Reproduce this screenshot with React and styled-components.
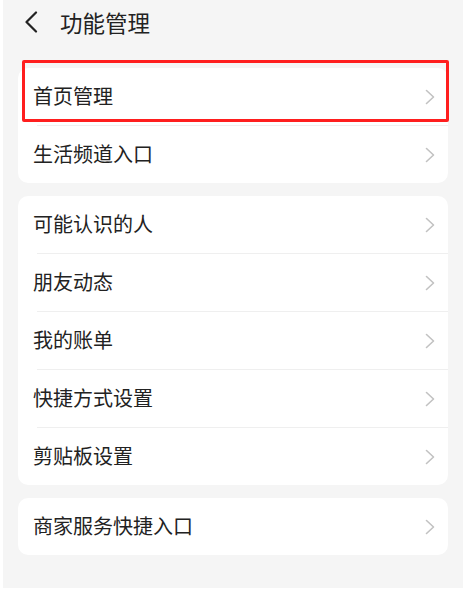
import React from "react";
import styled, { createGlobalStyle } from "styled-components";

const Global = createGlobalStyle`
  html, body { margin: 0; padding: 0; background: #ffffff; }
  body { font-family: "Noto Sans CJK SC", "Noto Sans", sans-serif; }
`;

const Page = styled.div`
  margin-left: 3px;
  width: 460px;
  height: 588px;
  background: #f5f5f5;
  padding: 0 15px;
  box-sizing: border-box;
  display: flex;
  flex-direction: column;
`;

const Header = styled.div`
  height: 44px;
  display: flex;
  align-items: center;
  gap: 22px;
  padding-left: 6px;
`;

const Title = styled.h1`
  margin: 0;
  font-size: 22.5px;
  font-weight: 400;
  color: #222222;
  line-height: 1;
`;

const Cards = styled.div`
  margin-top: 24px;
  display: flex;
  flex-direction: column;
  gap: 13px;
`;

const Card = styled.div`
  position: relative;
  background: #ffffff;
  border-radius: 10px;
  display: flex;
  flex-direction: column;
`;

const Row = styled.div`
  height: 57px;
  display: flex;
  align-items: center;
  justify-content: space-between;
  padding: 0 13px 0 15px;
`;

const Label = styled.span`
  font-size: 20px;
  color: #222222;
  line-height: 1;
  margin-top: -2px;
`;

const Divider = styled.div`
  height: 1px;
  margin-left: 19px;
  background: #efefef;
`;

const Highlight = styled.div`
  position: absolute;
  left: 4px;
  top: -8px;
  width: 427px;
  height: 62px;
  box-sizing: border-box;
  border: 3px solid #ff1e1e;
  border-radius: 2px;
  pointer-events: none;
`;

const Back = () => (
  <svg width="14" height="22" viewBox="0 0 14 22">
    <polyline points="12,1.5 2.5,11 12,20.5" fill="none" stroke="#222" strokeWidth="2.2" strokeLinecap="round" strokeLinejoin="round" />
  </svg>
);

const Chevron = () => (
  <svg width="10" height="16" viewBox="0 0 10 16">
    <polyline points="1.5,1.5 8.5,8 1.5,14.5" fill="none" stroke="#c2c2c2" strokeWidth="1.6" strokeLinecap="round" strokeLinejoin="round" />
  </svg>
);

const groups = [
  ["首页管理", "生活频道入口"],
  ["可能认识的人", "朋友动态", "我的账单", "快捷方式设置", "剪贴板设置"],
  ["商家服务快捷入口"],
];

export default function App() {
  return (
    <>
      <Global />
      <Page>
        <Header>
          <Back />
          <Title>功能管理</Title>
        </Header>
        <Cards>
          {groups.map((items, gi) => (
            <Card key={gi}>
              {gi === 0 && <Highlight />}
              {items.map((t, i) => (
                <React.Fragment key={t}>
                  {i > 0 && <Divider />}
                  <Row>
                    <Label>{t}</Label>
                    <Chevron />
                  </Row>
                </React.Fragment>
              ))}
            </Card>
          ))}
        </Cards>
      </Page>
    </>
  );
}
